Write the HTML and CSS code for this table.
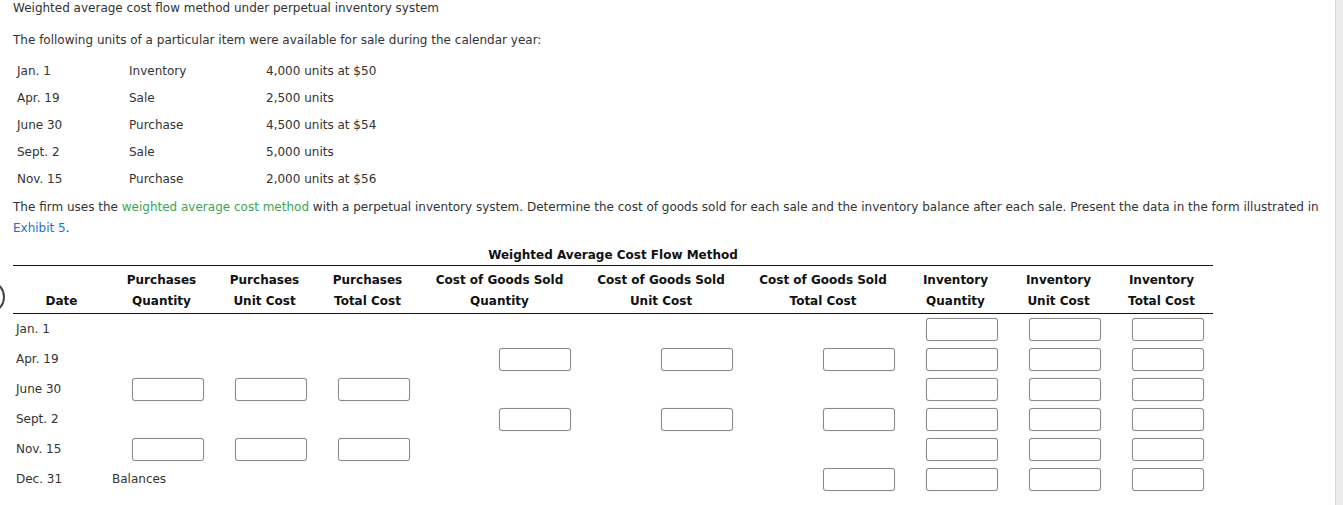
FILE: index.html
```html
<!DOCTYPE html>
<html>
<head>
<meta charset="utf-8">
<link rel="stylesheet" href="styles.css">
</head>
<body>
<div class="page">
  <p class="title">Weighted average cost flow method under perpetual inventory system</p>
  <p class="intro">The following units of a particular item were available for sale during the calendar year:</p>
  <div class="facts">
    <span>Jan. 1</span><span>Inventory</span><span>4,000 units at $50</span>
    <span>Apr. 19</span><span>Sale</span><span>2,500 units</span>
    <span>June 30</span><span>Purchase</span><span>4,500 units at $54</span>
    <span>Sept. 2</span><span>Sale</span><span>5,000 units</span>
    <span>Nov. 15</span><span>Purchase</span><span>2,000 units at $56</span>
  </div>
  <p class="task">The firm uses the <span class="term">weighted average cost method</span> with a perpetual inventory system. Determine the cost of goods sold for each sale and the inventory balance after each sale. Present the data in the form illustrated in <span class="link">Exhibit 5</span>.</p>

  <div class="sheet">
    <div class="caption">Weighted Average Cost Flow Method</div>
    <div class="grid head">
      <div class="hc"><br>Date</div>
      <div class="hc">Purchases<br>Quantity</div>
      <div class="hc">Purchases<br>Unit Cost</div>
      <div class="hc">Purchases<br>Total Cost</div>
      <div class="hc">Cost of Goods Sold<br>Quantity</div>
      <div class="hc">Cost of Goods Sold<br>Unit Cost</div>
      <div class="hc">Cost of Goods Sold<br>Total Cost</div>
      <div class="hc">Inventory<br>Quantity</div>
      <div class="hc">Inventory<br>Unit Cost</div>
      <div class="hc">Inventory<br>Total Cost</div>
    </div>
    <div class="grid body">
      <div class="date">Jan. 1</div><div></div><div></div><div></div><div></div><div></div><div></div>
      <div class="in"><span class="box"></span></div><div class="in"><span class="box"></span></div><div class="in"><span class="box"></span></div>

      <div class="date">Apr. 19</div><div></div><div></div><div></div>
      <div class="in"><span class="box"></span></div><div class="in"><span class="box"></span></div><div class="in"><span class="box"></span></div>
      <div class="in"><span class="box"></span></div><div class="in"><span class="box"></span></div><div class="in"><span class="box"></span></div>

      <div class="date">June 30</div>
      <div class="in"><span class="box"></span></div><div class="in"><span class="box"></span></div><div class="in"><span class="box"></span></div>
      <div></div><div></div><div></div>
      <div class="in"><span class="box"></span></div><div class="in"><span class="box"></span></div><div class="in"><span class="box"></span></div>

      <div class="date">Sept. 2</div><div></div><div></div><div></div>
      <div class="in"><span class="box"></span></div><div class="in"><span class="box"></span></div><div class="in"><span class="box"></span></div>
      <div class="in"><span class="box"></span></div><div class="in"><span class="box"></span></div><div class="in"><span class="box"></span></div>

      <div class="date">Nov. 15</div>
      <div class="in"><span class="box"></span></div><div class="in"><span class="box"></span></div><div class="in"><span class="box"></span></div>
      <div></div><div></div><div></div>
      <div class="in"><span class="box"></span></div><div class="in"><span class="box"></span></div><div class="in"><span class="box"></span></div>

      <div class="date">Dec. 31</div><div class="label">Balances</div><div></div><div></div><div></div><div></div>
      <div class="in"><span class="box"></span></div>
      <div class="in"><span class="box"></span></div><div class="in"><span class="box"></span></div><div class="in"><span class="box"></span></div>
    </div>
  </div>
</div>
<div class="ring"></div>
<div class="scrollbar"></div>
</body>
</html>
```

FILE: styles.css
```css
html, body {
  margin: 0;
  padding: 0;
  background: #fff;
}
body {
  font-family: "DejaVu Sans", Verdana, sans-serif;
  font-size: 12px;
  color: #333;
  overflow: hidden;
}
.page {
  padding: 0 0 0 13px;
}
p {
  margin: 0;
}
.title {
  line-height: 16px;
}
.intro {
  line-height: 16px;
  margin-top: 16px;
}
.facts {
  display: grid;
  grid-template-columns: 112px 137px 200px;
  grid-auto-rows: 27px;
  align-items: center;
  margin-top: 9px;
  padding-left: 4px;
}
.task {
  line-height: 21px;
  margin-top: 5px;
  padding-right: 14px;
}
.term {
  color: #3aa655;
}
.link {
  color: #1a6fd1;
}
.sheet {
  width: 1200px;
  margin-top: 8px;
}
.caption {
  text-align: center;
  font-weight: bold;
  color: #111;
  line-height: 16px;
  padding-bottom: 2px;
  border-bottom: 1px solid #111;
}
.grid {
  display: grid;
  grid-template-columns: 97px 103px 103px 103px 161px 162px 162px 103px 103px 103px;
}
.head {
  border-bottom: 1px solid #111;
  padding: 4px 0 1px;
}
.hc {
  text-align: center;
  font-weight: bold;
  color: #111;
  line-height: 21px;
}
.body {
  grid-auto-rows: 30px;
  padding-top: 0;
}
.body > div {
  display: flex;
  align-items: center;
}
.date {
  padding-left: 3px;
}
.label {
  padding-left: 2px;
}
.in {
  justify-content: flex-end;
  padding-right: 9px;
}
.box {
  display: block;
  width: 72px;
  height: 23px;
  box-sizing: border-box;
  border: 1px solid #8a8a8a;
  border-radius: 3px;
  box-shadow: 0 0 1px #bbb;
  background: #fff;
}
.ring {
  position: absolute;
  left: -29px;
  top: 280px;
  width: 30px;
  height: 30px;
  border: 2px solid #444;
  border-radius: 50%;
}
.scrollbar {
  position: fixed;
  top: 0;
  right: 0;
  width: 7px;
  height: 100%;
  background: #ececec;
  border-left: 1px solid #d6d6d6;
}
```
